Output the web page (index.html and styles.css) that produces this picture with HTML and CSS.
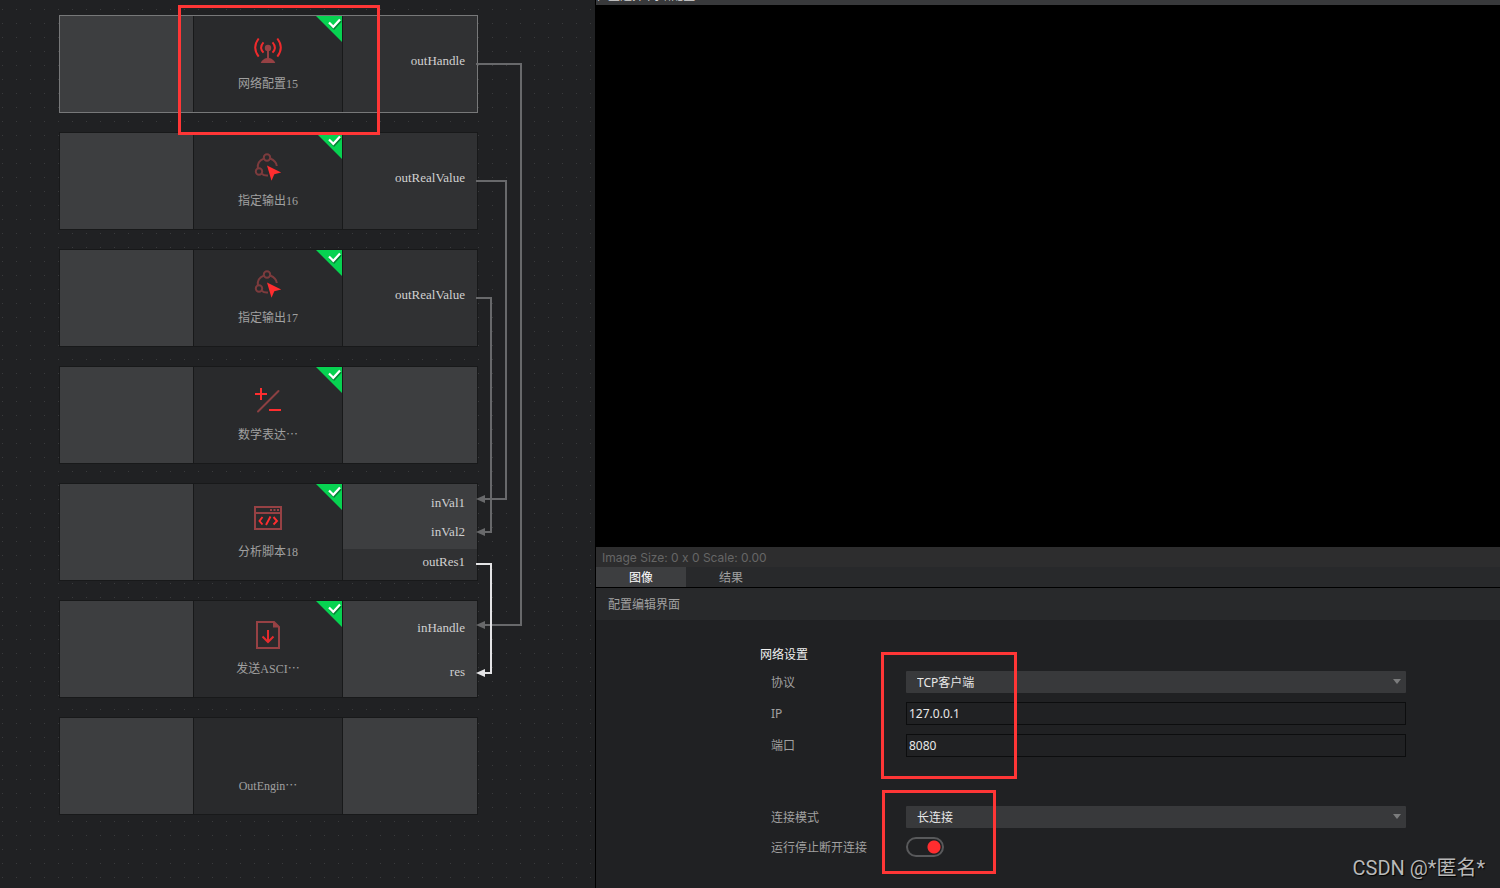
FILE: index.html
```html
<!DOCTYPE html>
<html lang="zh-CN">
<head>
<meta charset="utf-8">
<title>网络配置</title>
<link rel="stylesheet" href="styles.css">
</head>
<body>
<svg class="defs" aria-hidden="true">
  <symbol id="i-check" viewBox="0 0 26 26">
    <path d="M0 0H26V26Z" fill="#07d251"/>
    <path d="M14 8.500L18 12.500L25 5" fill="none" stroke="#067f35" stroke-width="2"/>
    <path d="M13 6.500L17.300 10.800L24 3.500" fill="none" stroke="#fff" stroke-width="2.200"/>
  </symbol>
  <symbol id="i-antenna" viewBox="0 0 32 32">
    <g fill="none" stroke="#ee2a2c" stroke-width="2">
      <path d="M6.700 4.500Q-.3 13.500 6.700 22.700M25.300 4.500Q32.300 13.500 25.300 22.700"/>
      <path d="M11.500 8.300Q6.800 13.500 11.500 18.700M20.500 8.300Q25.200 13.500 20.500 18.700"/>
    </g>
    <g fill="#964144"><circle cx="16" cy="14" r="3.200"/><path d="M15 16H17V24Q21.500 24.800 23.300 29H8.700Q10.500 24.800 15 24Z"/></g>
  </symbol>
  <symbol id="i-output" viewBox="0 0 32 32">
    <g fill="none" stroke="#7c3b3d" stroke-width="2">
      <circle cx="15" cy="6.500" r="3.200"/><circle cx="7" cy="20.500" r="3.200"/>
      <path d="M11.800 7.700Q5 10.500 5.800 17.200M18.200 7.500Q24.200 10 24.800 15M9.800 22.800Q12 25 16 24.500"/>
    </g>
    <path d="M15 14.500L29.200 21.500L22.300 23.300L19.500 29.800Z" fill="#ff2d2f"/>
  </symbol>
  <symbol id="i-math" viewBox="0 0 32 32">
    <path d="M6 26.500L26.500 6" stroke="#8b4042" stroke-width="2" stroke-linecap="round"/>
    <path d="M3 9H15M9 3V15M17 25H29" stroke="#ff2d2f" stroke-width="2"/>
  </symbol>
  <symbol id="i-script" viewBox="0 0 32 32">
    <path d="M3 5H29V27H3ZM3 11H29" fill="none" stroke="#964144" stroke-width="2"/>
    <path d="M18 8H20M21.500 8H23.500M25 8H27" stroke="#964144" stroke-width="2"/>
    <path d="M10.500 15L7.500 19L10.500 22.500M21.500 15L25 19L21.500 22.500M18.500 14.500L14 23" fill="none" stroke="#ff2d2f" stroke-width="1.900"/>
  </symbol>
  <symbol id="i-send" viewBox="0 0 32 32">
    <path d="M5 3H22L27 8V29H5Z" fill="none" stroke="#964144" stroke-width="2"/>
    <path d="M21 2L28 8.500H21Z" fill="#964144"/>
    <path d="M16 11V22.500M10.500 17.500L16 23L21.500 17.500" fill="none" stroke="#e52b2d" stroke-width="2"/>
  </symbol>
</svg>

<div class="app">
  <main class="canvas">
    <div class="flow">
      <section class="node selected">
        <div class="side"></div>
        <div class="core">
          <svg class="icon"><use href="#i-antenna"/></svg>
          <span class="name">网络配置15</span>
          <svg class="badge"><use href="#i-check"/></svg>
          <div class="mark mark-node"></div>
        </div>
        <div class="ports"><div class="outs single"><span>outHandle</span></div></div>
      </section>
      <section class="node">
        <div class="side"></div>
        <div class="core">
          <svg class="icon"><use href="#i-output"/></svg>
          <span class="name">指定输出16</span>
          <svg class="badge"><use href="#i-check"/></svg>
        </div>
        <div class="ports"><div class="outs single"><span>outRealValue</span></div></div>
      </section>
      <section class="node">
        <div class="side"></div>
        <div class="core">
          <svg class="icon"><use href="#i-output"/></svg>
          <span class="name">指定输出17</span>
          <svg class="badge"><use href="#i-check"/></svg>
        </div>
        <div class="ports"><div class="outs single"><span>outRealValue</span></div></div>
      </section>
      <section class="node">
        <div class="side"></div>
        <div class="core">
          <svg class="icon"><use href="#i-math"/></svg>
          <span class="name">数学表达<span class="more">…</span></span>
          <svg class="badge"><use href="#i-check"/></svg>
        </div>
        <div class="ports"></div>
      </section>
      <section class="node">
        <div class="side"></div>
        <div class="core">
          <svg class="icon"><use href="#i-script"/></svg>
          <span class="name">分析脚本18</span>
          <svg class="badge"><use href="#i-check"/></svg>
        </div>
        <div class="ports">
          <div class="ins"><span>inVal1</span><span>inVal2</span></div>
          <div class="outs"><span>outRes1</span></div>
        </div>
      </section>
      <section class="node">
        <div class="side"></div>
        <div class="core">
          <svg class="icon"><use href="#i-send"/></svg>
          <span class="name">发送ASCI<span class="more">…</span></span>
          <svg class="badge"><use href="#i-check"/></svg>
        </div>
        <div class="ports">
          <div class="ins wide"><span>inHandle</span><span>res</span></div>
        </div>
      </section>
      <section class="node">
        <div class="side"></div>
        <div class="core">
          <div class="icon"></div>
          <span class="name">OutEngin<span class="more">…</span></span>
        </div>
        <div class="ports"></div>
      </section>
    </div>
    <svg class="wires" viewBox="0 0 595 888" aria-hidden="true">
      <g class="wire">
        <path d="M476 64H521V625H484"/>
        <path d="M476 181H506V499H484"/>
        <path d="M476 298H491V532H484"/>
      </g>
      <g class="tip">
        <path d="M476 625L485 621V629Z"/>
        <path d="M476 499L485 495V503Z"/>
        <path d="M476 532L485 528V536Z"/>
      </g>
      <path class="wire active" d="M476 564H491V673H484"/>
      <path class="tip active" d="M476 673L485 669V677Z"/>
    </svg>
  </main>

  <aside class="panel">
    <header class="strip"><span>位置选择:网络配置</span></header>
    <div class="viewer"></div>
    <div class="status">Image Size: 0 x 0 Scale: 0.00</div>
    <nav class="tabs">
      <button type="button" class="tab current">图像</button>
      <button type="button" class="tab">结果</button>
    </nav>
    <h1 class="title">配置编辑界面</h1>
    <form class="form">
      <section class="group">
        <h2 class="heading">网络设置</h2>
        <div class="row">
          <label for="protocol">协议</label>
          <div class="pick"><select id="protocol"><option>TCP客户端</option></select></div>
        </div>
        <div class="row">
          <label for="ip">IP</label>
          <input class="text" id="ip" type="text" value="127.0.0.1">
        </div>
        <div class="row">
          <label for="port">端口</label>
          <input class="text" id="port" type="text" value="8080">
        </div>
        <div class="mark mark-net"></div>
      </section>
      <section class="group">
        <div class="row">
          <label for="mode">连接模式</label>
          <div class="pick"><select id="mode"><option>长连接</option></select></div>
        </div>
        <div class="row">
          <label for="stop">运行停止断开连接</label>
          <input class="switch" id="stop" type="checkbox" checked>
        </div>
        <div class="mark mark-mode"></div>
      </section>
    </form>
    <div class="credit">CSDN @*匿名*</div>
  </aside>
</div>
</body>
</html>
```
FILE: styles.css
```css
* { box-sizing: border-box; }
body {
  margin: 0;
  background: #202123;
  color: #a0a0a0;
  font: 12px/16px "Noto Sans", "Noto Sans CJK SC", sans-serif;
}
.defs { position: absolute; width: 0; height: 0; }
.app { display: flex; min-height: 100vh; }

.canvas {
  position: relative;
  flex: 0 0 596px;
  padding: 15px 0 0 59px;
  border-right: 1px solid #000;
  background:
    linear-gradient(to right, #202123 2px, transparent 2px 3px, #202123 3px) 0 0 / 14px 14px,
    linear-gradient(to bottom, #202123 9px, #3a3b3d 9px 10px, #202123 10px) 0 0 / 14px 14px;
}
.flow { display: flex; flex-direction: column; gap: 19px; width: 419px; }
.node {
  display: grid;
  grid-template-columns: 133px 150px 1fr;
  min-height: 98px;
  border: 1px solid #18191a;
  background: #3d3e40;
}
.selected { border-color: #777879; }
.core {
  position: relative;
  display: flex;
  flex-direction: column;
  align-items: center;
  padding-top: 18px;
  border: solid #18191a;
  border-width: 0 1px;
  background: #292a2c;
}
.icon { width: 32px; height: 32px; margin-bottom: 10px; }
.name {
  font-family: "Liberation Serif", "Noto Sans CJK SC", serif;
  color: #a0a0a0;
}
.more { font-family: "Noto Sans CJK SC", sans-serif; line-height: 0; }
.badge { position: absolute; top: 0; right: 0; width: 26px; height: 26px; }

.ports {
  display: flex;
  flex-direction: column;
  font: 13px/16px "Liberation Serif", serif;
  color: #d0d0d0;
}
.ins, .outs { display: flex; flex-direction: column; padding-right: 12px; text-align: right; }
.ins { flex: 1; padding-top: 11px; gap: 13px; }
.wide { padding-top: 19px; gap: 28px; }
.outs { padding-top: 5px; padding-bottom: 10px; background: #303133; }
.single { flex: 1; padding-top: 37px; }

.wires { position: absolute; top: 0; left: 0; width: 595px; height: 888px; }
.wire { fill: none; stroke: #68696b; stroke-width: 2; }
.tip { fill: #68696b; }
.wire.active { stroke: #e4e4e6; }
.tip.active { fill: #e4e4e6; }

.mark { position: absolute; border: 3px solid #ff3636; pointer-events: none; z-index: 2; }
.mark-node { top: -11px; left: -16px; width: 202px; height: 130px; }
.mark-net { top: 5px; left: 121px; width: 136px; height: 127px; }
.mark-mode { top: -16px; left: 122px; width: 114px; height: 84px; }

.panel { position: relative; flex: 1; min-width: 0; display: flex; flex-direction: column; }
.strip {
  display: flex;
  align-items: flex-end;
  height: 5px;
  overflow: hidden;
  background: #38393b;
  color: #d8d8d8;
}
.strip span { margin-bottom: 1px; }
.viewer { flex: 1; background: #000; }
.status {
  height: 20px;
  padding: 3px 6px;
  background: #2d2d2e;
  color: #666;
  font-family: Inter, sans-serif;
}
.tabs { display: flex; height: 21px; border-bottom: 1px solid #000; background: #28292b; }
.tab {
  width: 90px;
  padding: 2px 0 0;
  border: 0;
  background: none;
  color: #a0a0a0;
  font: inherit;
}
.current { background: #3d3e40; color: #fff; }
.title { margin: 0; padding: 9px 12px 7px; background: #28292b; font: inherit; }

.form { display: flex; flex-direction: column; gap: 49px; padding: 27px 94px 31px 164px; }
.group { position: relative; display: flex; flex-direction: column; gap: 9px; }
.heading { margin: 0 0 -1px; color: #f0f0f0; font: inherit; }
.row { display: grid; grid-template-columns: 135px 1fr; align-items: center; padding-left: 11px; }
.row label { padding-top: 1px; }
.pick { position: relative; display: flex; }
.pick::after {
  content: "";
  position: absolute;
  top: 8px;
  right: 5px;
  border: solid transparent;
  border-width: 5px 4px 0;
  border-top-color: #7b7c7d;
}
select {
  appearance: none;
  width: 100%;
  height: 22px;
  padding: 2px 11px 0;
  border: 0;
  border-radius: 1px;
  background: #38393b;
  color: #e8e8e8;
  font: inherit;
}
.text {
  width: 100%;
  height: 23px;
  padding: 0 2px;
  border: 1px solid #0c0d0e;
  background: #202123;
  color: #e8e8e8;
  font: inherit;
}
.switch {
  appearance: none;
  width: 38px;
  height: 20px;
  margin: 0;
  border: 2px solid #58595b;
  border-radius: 10px;
  background: radial-gradient(circle at 26px 8px, #ff2d2f 6px, transparent 7px);
}
.credit {
  position: absolute;
  right: 15px;
  bottom: 8px;
  color: #b8b8b8;
  font: 20px/24px Roboto, "Noto Sans CJK SC", sans-serif;
  text-shadow: 1px 1px 1px #000;
}
```
